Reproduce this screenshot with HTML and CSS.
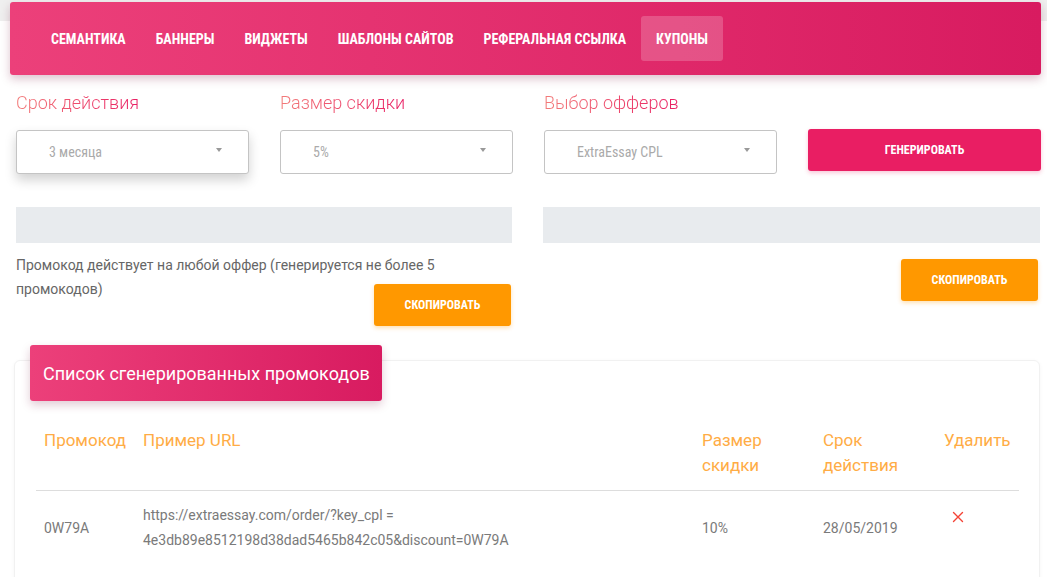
FILE: index.html
```html
<!DOCTYPE html>
<html lang="ru">
<head>
<meta charset="utf-8">
<title>Купоны</title>
<link rel="stylesheet" href="styles.css">
</head>
<body>
<header class="top">
  <nav class="nav">
    <a class="nav-item">Семантика</a>
    <a class="nav-item">Баннеры</a>
    <a class="nav-item">Виджеты</a>
    <a class="nav-item">Шаблоны сайтов</a>
    <a class="nav-item">Реферальная ссылка</a>
    <a class="nav-item active">Купоны</a>
  </nav>
</header>
<main class="main">
  <section class="form">
    <div class="label"><span>Срок действия</span></div>
    <div class="label"><span>Размер скидки</span></div>
    <div class="label"><span>Выбор офферов</span></div>
    <div class="label"></div>
    <div class="select focused"><span>3 месяца</span><i class="caret"></i></div>
    <div class="select"><span>5%</span><i class="caret"></i></div>
    <div class="select"><span>ExtraEssay CPL</span><i class="caret"></i></div>
    <button class="btn btn-pink">Генерировать</button>
  </section>
  <section class="codes">
    <div class="half">
      <div class="bar"></div>
      <div class="under-left">
        <p class="note">Промокод действует на любой оффер (генерируется не более 5 промокодов)</p>
        <button class="btn btn-orange">Скопировать</button>
      </div>
    </div>
    <div class="half">
      <div class="bar"></div>
      <div class="under-right">
        <button class="btn btn-orange">Скопировать</button>
      </div>
    </div>
  </section>
  <section class="card">
    <div class="card-head">Список сгенерированных промокодов</div>
    <table class="table">
      <colgroup>
        <col class="c1"><col class="c2"><col class="c3"><col class="c4"><col class="c5">
      </colgroup>
      <thead>
        <tr>
          <th>Промокод</th>
          <th>Пример URL</th>
          <th>Размер<br>скидки</th>
          <th>Срок<br>действия</th>
          <th>Удалить</th>
        </tr>
      </thead>
      <tbody>
        <tr>
          <td>0W79A</td>
          <td>https://extraessay.com/order/?key_cpl =<br>4e3db89e8512198d38dad5465b842c05&amp;discount=0W79A</td>
          <td>10%</td>
          <td>28/05/2019</td>
          <td class="del"><svg width="12" height="12" viewBox="0 0 12 12"><path d="M1.5 1.5L10.5 10.5M10.5 1.5L1.5 10.5" stroke="#f44336" stroke-width="1.4" stroke-linecap="round"/></svg></td>
        </tr>
      </tbody>
    </table>
  </section>
</main>
</body>
</html>
```
FILE: styles.css
```css
* { box-sizing: border-box; }
html, body { margin: 0; padding: 0; background: #fff; }
body { font-family: Roboto, "Liberation Sans", sans-serif; color: #666; }

.top {
  padding: 2px 6px 0 10px;
  background: linear-gradient(to bottom, #efefef 0, #efefef 21px, #fff 21px);
}
.nav {
  height: 73px;
  display: flex;
  align-items: center;
  padding-left: 26px;
  border-radius: 3px;
  background: linear-gradient(90deg, #ec407a 0%, #d81b60 100%);
  box-shadow: 0 4px 10px rgba(120, 20, 60, 0.25);
}
.nav-item {
  display: flex;
  align-items: center;
  height: 45px;
  padding: 0 15px;
  border-radius: 3px;
  color: #fff;
  font-family: "Roboto Condensed", "Liberation Sans Narrow", "Arial Narrow", Roboto, sans-serif;
  font-weight: 700;
  font-size: 14px;
  text-transform: uppercase;
  white-space: nowrap;
}
.nav-item.active { background: rgba(255, 255, 255, 0.2); }

.main { padding: 0 7px 0 16px; }

.form {
  display: grid;
  grid-template-columns: repeat(4, 233px);
  column-gap: 31px;
  padding-top: 18px;
}
.label {
  height: 20px;
  margin-bottom: 17px;
  font-size: 18px;
  font-weight: 300;
  line-height: 20px;
}
.label span {
  display: inline-block;
  background: linear-gradient(90deg, #f27c7a, #e91e63);
  -webkit-background-clip: text;
  background-clip: text;
  color: transparent;
}
.select {
  height: 44px;
  border: 1px solid #c4c4c4;
  border-radius: 3px;
  display: flex;
  align-items: center;
  justify-content: space-between;
  padding: 0 26px 0 32px;
  font-family: "Roboto Condensed", "Liberation Sans Narrow", "Arial Narrow", Roboto, sans-serif;
  font-size: 14px;
  color: #aaa;
  background: #fff;
}
.select.focused { box-shadow: 0 6px 12px rgba(0, 0, 0, 0.18); }
.caret {
  width: 0; height: 0;
  border-left: 3.5px solid transparent;
  border-right: 3.5px solid transparent;
  border-top: 4px solid #999;
  margin-top: -4px;
}
.btn {
  border: 0;
  border-radius: 3px;
  color: #fff;
  font-family: "Roboto Condensed", "Liberation Sans Narrow", "Arial Narrow", Roboto, sans-serif;
  font-weight: 700;
  font-size: 12px;
  text-transform: uppercase;
  height: 42px;
  cursor: pointer;
}
.btn-pink {
  background: #e91e63;
  margin-top: -1px;
  box-shadow: 0 2px 4px rgba(233, 30, 99, 0.25);
}
.btn-orange {
  width: 137px;
  background: #ff9800;
  box-shadow: 0 2px 4px rgba(255, 152, 0, 0.3);
}

.codes {
  display: grid;
  grid-template-columns: 496px 497px;
  column-gap: 31px;
  margin-top: 33px;
}
.bar { height: 36px; background: #e8ebee; }
.under-left {
  display: grid;
  grid-template-rows: 31px 42px;
  margin-top: 10px;
}
.note {
  grid-area: 1 / 1 / 3 / 2;
  margin: 0;
  font-size: 14px;
  line-height: 24px;
  color: #666;
}
.under-left .btn { grid-area: 2 / 1 / 3 / 2; justify-self: end; margin-right: 1px; }
.under-right {
  display: flex;
  justify-content: flex-end;
  margin-top: 16px;
  padding-right: 2px;
}

.card {
  margin: 34px 0 0 -2px;
  border: 1px solid #f1f1f1;
  border-radius: 6px;
  box-shadow: 0 1px 4px rgba(0, 0, 0, 0.04);
  padding: 0 20px 20px 21px;
  min-height: 240px;
}
.card-head {
  width: 352px;
  height: 56px;
  margin: -16px 0 0 -6px;
  padding-left: 13px;
  display: flex;
  align-items: center;
  border-radius: 3px;
  background: linear-gradient(90deg, #ec407a 0%, #d81b60 100%);
  box-shadow: 0 4px 10px rgba(120, 20, 60, 0.22);
  color: #fff;
  font-size: 18px;
  font-weight: 400;
}
.table {
  width: 983px;
  margin-top: 15px;
  border-collapse: collapse;
  table-layout: fixed;
}
.c1 { width: 99px; }
.c2 { width: 559px; }
.c3 { width: 121px; }
.c4 { width: 121px; }
.c5 { width: 83px; }
.table th {
  text-align: left;
  vertical-align: top;
  padding: 12px 8px;
  font-size: 17px;
  font-weight: 400;
  line-height: 25px;
  color: #ffac45;
  border-bottom: 1px solid #ddd;
}
.table td {
  padding: 12px 8px;
  font-size: 14px;
  line-height: 25px;
  color: #7a7a7a;
  vertical-align: middle;
}
.table td.del { vertical-align: top; padding-top: 20px; padding-left: 16px; line-height: 0; }
```
